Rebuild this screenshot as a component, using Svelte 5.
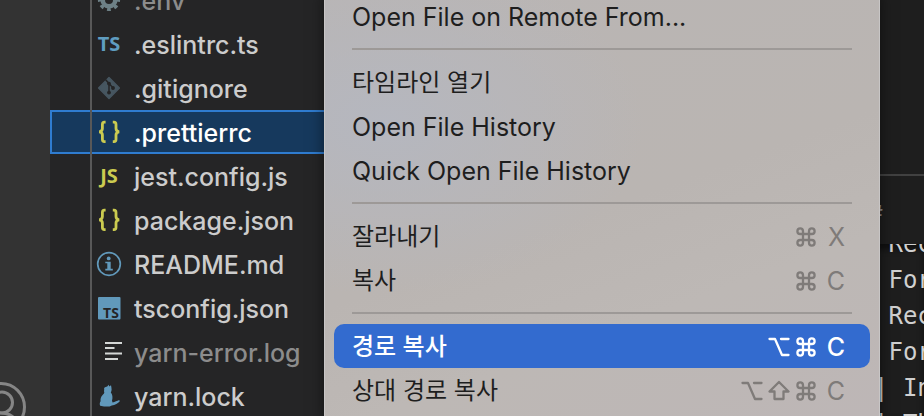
<script>
  const files = [
    { name: '.env', icon: 'gear', dim: true },
    { name: '.eslintrc.ts', icon: 'ts' },
    { name: '.gitignore', icon: 'git' },
    { name: '.prettierrc', icon: 'braces', selected: true },
    { name: 'jest.config.js', icon: 'js' },
    { name: 'package.json', icon: 'braces' },
    { name: 'README.md', icon: 'info' },
    { name: 'tsconfig.json', icon: 'tsbox' },
    { name: 'yarn-error.log', icon: 'lines', dim: true },
    { name: 'yarn.lock', icon: 'cat' }
  ];
  const groups = [
    [{ label: 'Open File on Remote From...' }],
    [{ label: '타임라인 열기', korean: true }, { label: 'Open File History' }, { label: 'Quick Open File History' }],
    [
      { label: '잘라내기', korean: true, keys: ['cmd'], letter: 'X' },
      { label: '복사', korean: true, keys: ['cmd'], letter: 'C' }
    ],
    [
      { label: '경로 복사', korean: true, keys: ['opt', 'cmd'], letter: 'C', active: true },
      { label: '상대 경로 복사', korean: true, keys: ['opt', 'shift', 'cmd'], letter: 'C' }
    ]
  ];
  const output = [' Rec', ' For', ' Rec', ' For', '| In', '| Th'];
</script>

<div class="window">
  <nav class="activity" aria-label="Activity">
    <button class="account" aria-label="Accounts">
      <svg width="50" height="50" viewBox="0 0 50 50" fill="none" stroke="#868686" stroke-width="3">
        <circle cx="25" cy="25" r="23.5" />
        <circle cx="26" cy="20.5" r="10.5" />
        <path d="M9 43c1-8 8-12 16-12s15 4 16 12" />
      </svg>
    </button>
  </nav>

  <aside class="explorer">
    <ul>
      {#each files as file}
        <li>
          <button class="file" class:dim={file.dim} class:selected={file.selected}>
            <svg class="icon" width="28" height="28" viewBox="0 0 28 28">
              {#if file.icon === 'gear'}
                <g fill="none" stroke="#6d8086">
                  <circle cx="14" cy="14" r="6.3" stroke-width="4.6" />
                  <circle cx="14" cy="14" r="9.4" stroke-width="3.4" stroke-dasharray="3.7 3.68" stroke-dashoffset="1.85" />
                </g>
              {:else if file.icon === 'ts'}
                <text x="14" y="21" text-anchor="middle" class="glyph" fill="#5f9dc0">TS</text>
              {:else if file.icon === 'js'}
                <text x="14" y="21" text-anchor="middle" class="glyph" fill="#cbcb50">JS</text>
              {:else if file.icon === 'git'}
                <path d="M14 3.6 24.4 14 14 24.4 3.6 14Z" fill="#465660" stroke="#465660" stroke-width="1.4" stroke-linejoin="round" />
                <g stroke="#252526" stroke-width="1.5" fill="#252526">
                  <path d="M10.6 5.8 14 9.4V19M14 9.4l4.2 4.6" fill="none" />
                  <circle cx="14" cy="9.6" r="1.2" /><circle cx="14" cy="18.6" r="1.2" /><circle cx="18" cy="14" r="1.2" />
                </g>
              {:else if file.icon === 'braces'}
                <path d="M10.6 4.2H9.4Q7.4 4.2 7.4 6.4V10.6Q7.4 13.4 4.2 13.8Q7.4 14.2 7.4 17V21.2Q7.4 23.6 9.4 23.6H10.6M17.8 4.2H19Q21 4.2 21 6.4V10.6Q21 13.4 24.2 13.8Q21 14.2 21 17V21.2Q21 23.6 19 23.6H17.8" fill="none" stroke="#cbcb50" stroke-width="2.8" />
              {:else if file.icon === 'info'}
                <circle cx="14" cy="14" r="11.3" fill="none" stroke="#6199bb" stroke-width="1.7" />
                <circle cx="13.7" cy="8.4" r="1.9" fill="#6199bb" />
                <path d="M10.3 11.7H15.7V18.8H17.8V20.5H10.3V18.8H12.3V13.3H10.3Z" fill="#6199bb" />
              {:else if file.icon === 'tsbox'}
                <rect x="3" y="3" width="22.5" height="22.5" rx="1" fill="#6199bb" />
                <text x="16" y="24" text-anchor="middle" class="small" fill="#252526">TS</text>
              {:else if file.icon === 'lines'}
                <path d="M10 5H27M10 10H19.5M10 15.5H27M10 21H23" stroke="#d4d7d6" stroke-width="2" />
              {:else}
                <path d="M14.2 4.6l-.5-1.9-1.5 1.8C9.8 5 8.7 5.8 9.2 7.4L9 9.2C9.9 11 8.6 11.8 7.4 13.2 5.9 15 5.3 16.7 5.6 19.2 4.6 20.6 4.5 22.4 5.2 23.8L9 24.4H14.6L16.8 23.6C20 23.5 23 21.3 24.8 19.3L24.2 18.1C22 18.8 20 20.2 17.6 20.6L17 18.8C18 15.4 17.4 12.4 15.8 10.5 17 8.7 16.7 6.7 16 3.3Z" fill="#6199bb" />
              {/if}
            </svg>
            <span class="name">{file.name}</span>
          </button>
        </li>
      {/each}
    </ul>
  </aside>

  <main class="editor">
    <div class="pane"></div>
    <div class="tabs">#</div>
    <div class="terminal">
      {#each output as line}<pre>{line}</pre>{/each}
    </div>
  </main>

  <div class="menu" role="menu">
    {#each groups as group}
      <div class="group">
        {#each group as item}
          <button class="item" class:active={item.active} role="menuitem">
            <span class:korean={item.korean}>{item.label}</span>
            {#if item.keys}
              <span class="keys">
                {#each item.keys as key}
                  <svg width="22" height="22" viewBox="0 0 22 22" fill="none" stroke="currentColor" stroke-width="2.3" stroke-linejoin="round" stroke-linecap="round">
                    {#if key === 'cmd'}
                      <path d="M8 8H14V14H8ZM8 8H5.2A2.8 2.8 0 1 1 8 5.2ZM14 8V5.2A2.8 2.8 0 1 1 16.8 8ZM14 14H16.8A2.8 2.8 0 1 1 14 16.8ZM8 14V16.8A2.8 2.8 0 1 1 5.2 14Z" />
                    {:else if key === 'opt'}
                      <path d="M1.5 3H7L14 19H20.5M13 3H20.5" />
                    {:else}
                      <path d="M11 2 20.5 11.5H15.5V19H6.5V11.5H1.5Z" />
                    {/if}
                  </svg>
                {/each}
                <span class="letter">{item.letter}</span>
              </span>
            {/if}
          </button>
        {/each}
      </div>
    {/each}
  </div>
</div>

<style>
  :global(body) { margin: 0; background: #1e1e1e; }
  .window {
    position: relative;
    display: grid;
    grid-template-columns: 50px 290px 1fr;
    height: 100vh;
    overflow: hidden;
    font-family: Inter, "Noto Sans CJK KR", sans-serif;
    font-size: 25px;
    font-weight: 500;
  }
  button { border: 0; margin: 0; padding: 0; background: none; font: inherit; color: inherit; text-align: left; }
  .activity { display: flex; flex-direction: column; justify-content: flex-end; align-items: flex-end; background: #333333; overflow: hidden; min-height: 0; }
  .account { height: 34px; width: 50px; padding-right: 24px; box-sizing: border-box; display: flex; justify-content: flex-end; align-items: flex-start; }
  .account svg { flex: none; }
  .explorer { background: #252526; color: #cccccc; overflow: hidden; min-height: 0; }
  ul { list-style: none; margin: -22px 0 0; padding: 0; }
  .file { position: relative; box-sizing: border-box; display: flex; align-items: center; gap: 11px; width: 100%; height: 44px; padding-left: 45px; line-height: 42px; white-space: nowrap; }
  .file::before { content: ""; position: absolute; left: 40px; top: 0; bottom: 0; width: 2px; background: #585858; }
  .file.dim { color: #8c8c8c; }
  .file.selected { background: #16395d; color: #ffffff; box-shadow: inset 0 0 0 2px #2f7cd0; }
  .icon { flex: none; }
  .name { padding-top: 2px; }
  .glyph { font: 700 20px "Noto Sans", sans-serif; }
  .small { font: 700 14px "Noto Sans", sans-serif; }
  .editor { display: flex; flex-direction: column; background: #1e1e1e; color: #d0d0d0; padding-left: 534px; overflow: hidden; min-width: 0; min-height: 0; }
  .pane { height: 174px; flex: none; border-bottom: 2px solid #414141; margin-left: -534px; }
  .tabs { height: 68px; flex: none; margin-left: -4px; font-size: 20px; line-height: 74px; color: #8a8a8a; }
  .terminal { flex: 1; overflow: hidden; font-family: "DejaVu Sans Mono", monospace; font-size: 24px; font-weight: 400; line-height: 36px; box-shadow: inset 0 5px 6px #00000080; }
  .terminal pre { margin: 0; font: inherit; }
  .terminal pre:first-child { margin-top: -18px; }
  .menu {
    position: absolute; left: 324px; right: 44px; top: -6px; bottom: -6px;
    box-sizing: border-box; padding: 0 10px; color: #1e1e1e; overflow: hidden; font-weight: 440;
    background: radial-gradient(ellipse 260px 170px at 60px 130px, #b5b7bf, #b5b7bf00), linear-gradient(160deg, #b9b5b4, #bab5b2 50%, #bdb8b5 70%, #bdb6b6);
    box-shadow: inset 1px 0 #c8c6c6, inset -1px 0 #c8c6c6, 0 0 14px #00000080;
  }
  .group + .group::before { content: ""; display: block; height: 2px; margin: 10px 18px; background: #9d9997; }
  .item { box-sizing: border-box; display: flex; align-items: center; justify-content: space-between; width: 100%; height: 44px; padding: 2px 18px 0; line-height: 42px; border-radius: 10px; white-space: nowrap; }
  .korean { font-size: 24px; }
  .keys { display: flex; align-items: center; gap: 5px; color: #7f7b79; font-weight: 400; }
  .letter { width: 30px; text-align: right; padding-right: 7px; box-sizing: border-box; }
  .active { background: #336bcf; color: #ffffff; }
  .active .korean, .active .keys { color: #ffffff; font-weight: 500; }
</style>
